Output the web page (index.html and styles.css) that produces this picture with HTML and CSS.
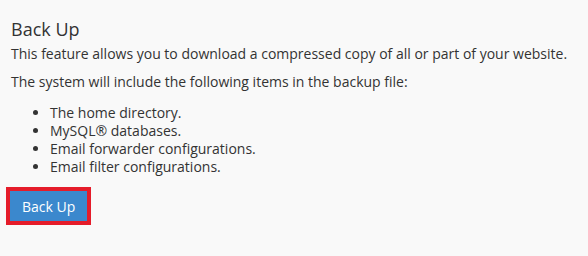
FILE: index.html
```html
<!DOCTYPE html>
<html lang="en">
<head>
    <meta charset="UTF-8">
    <meta name="viewport" content="width=device-width, initial-scale=1.0">
    <title>Back Up</title>
    <link rel="stylesheet" href="styles.css">
</head>
<body>

<div class="backup-page">
    <h1>Back Up</h1>
    <p>This feature allows you to download a compressed copy of all or part of your website.</p>
    <p>The system will include the following items in the backup file:</p>
    <ul class="items">
        <li>The home directory.</li>
        <li>MySQL® databases.</li>
        <li>Email forwarder configurations.</li>
        <li>Email filter configurations.</li>
    </ul>
    <div class="highlight">
        <button type="button" class="btn-primary">Back Up</button>
    </div>
</div>

</body>
</html>
```

FILE: styles.css
```css
body {
    font-family: "Open Sans", Arial, sans-serif;
    background-color: #f9f9f9;
    color: #333;
    margin: 0;
}
.backup-page {
    padding: 17px 11px 0 11px;
}
.backup-page h1 {
    font-size: 18px;
    font-weight: normal;
    line-height: 24px;
    margin: 0 0 3px 0;
}
.backup-page p {
    font-size: 14px;
    line-height: 20px;
    margin: 0 0 8px 0;
}
.items {
    font-size: 14px;
    line-height: 18px;
    margin: 12px 0 11px 0;
    padding-left: 39px;
}
.highlight {
    display: inline-block;
    border: 4px solid #e51c2a;
    margin-left: -5px;
}
.btn-primary {
    display: block;
    font-family: "Open Sans", Arial, sans-serif;
    font-size: 14px;
    height: 30px;
    padding: 0 12px;
    background: #3b88cd;
    color: #fff;
    border: none;
    cursor: pointer;
}
```
